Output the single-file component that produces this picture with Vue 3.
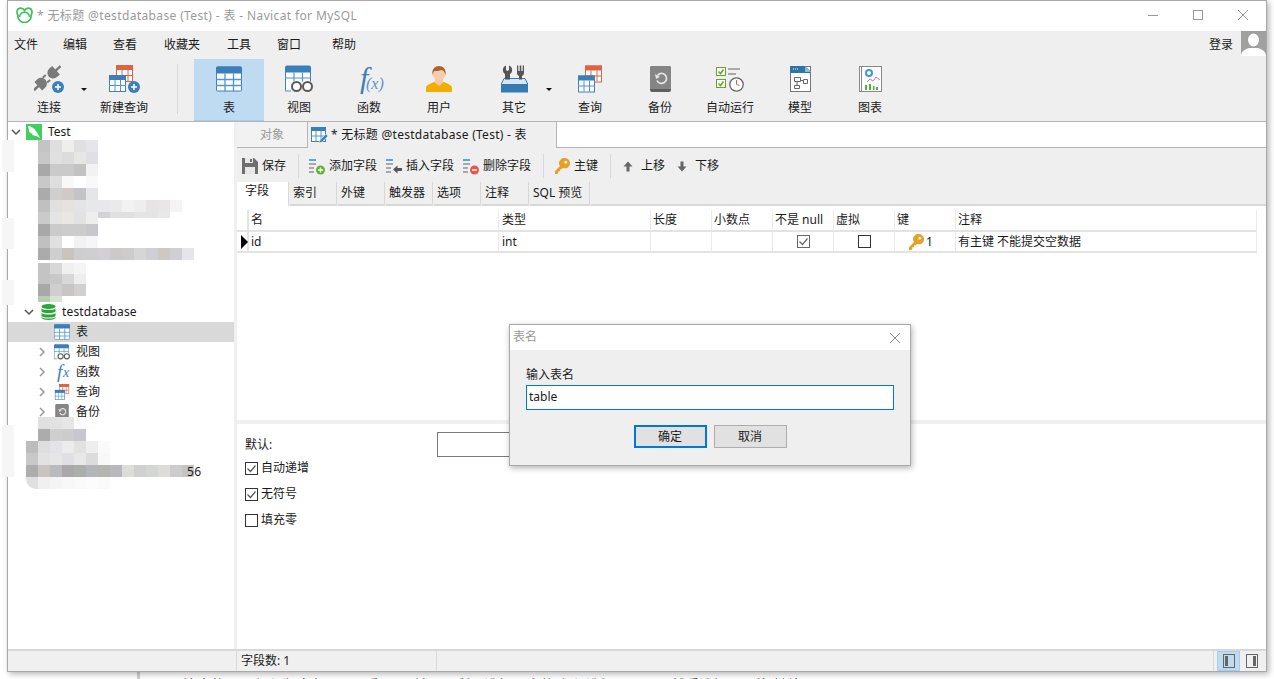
<script setup>
const menus = ['文件', '编辑', '查看', '收藏夹', '工具', '窗口', '帮助']

const leftTools = [
  { label: '连接', icon: 'plug', w: 30, h: 28, cls: 'tool-conn', arrow: true },
  { label: '新建查询', icon: 'newquery', w: 31, h: 28, cls: 'tool-new' }
]
const tools = [
  { label: '表', icon: 'table', w: 26, h: 25, active: true },
  { label: '视图', icon: 'view', w: 28, h: 27 },
  { label: '函数', icon: 'fx', w: 30, h: 30 },
  { label: '用户', icon: 'user', w: 26, h: 26 },
  { label: '其它', icon: 'other', w: 27, h: 27, arrow: true },
  { label: '查询', icon: 'query', w: 24, h: 27 },
  { label: '备份', icon: 'backup', w: 21, h: 26 },
  { label: '自动运行', icon: 'auto', w: 28, h: 26 },
  { label: '模型', icon: 'model', w: 21, h: 26 },
  { label: '图表', icon: 'chart', w: 23, h: 26 }
]

const subTabs = ['索引', '外键', '触发器', '选项', '注释', 'SQL 预览']
const columns = ['名', '类型', '长度', '小数点', '不是 null', '虚拟', '键', '注释']

const treeItems = [
  { label: '表', icon: 'table', selected: true },
  { label: '视图', icon: 'view', arrow: true },
  { label: '函数', icon: 'fxtree', arrow: true },
  { label: '查询', icon: 'query', arrow: true },
  { label: '备份', icon: 'backup', arrow: true }
]

// pixelated part of the tree, row by row
const mosaicTop = [
  [12, '#c4c4c4 #dedede #eeeeec #e0e0e0 #e6e6ea'],
  [12, '#c8c8c8 #e0e0e0 #dcdcdc #e6e6e4 #e0e0e4'],
  [12, '#a8a8a8 #cacaca #cacaca #c2c2c2 #f2f2f2'],
  [12, '#c8c8c8 #dedede #f8f8f8 #ffffff #f9f9f9'],
  [12, '#ababab #cfcfcf #cfcac8 #c4c4c6 #e4e6ea'],
  [12, '#c0c0c0 #e0e0e0 #e6e2de #e4e4e6 #e8e8ea #e8e8ea #eaeaea #f2f2f2 #eeeeee #e6e4e4 #e8e6e6 #f4f4f4'],
  [6, '#cacaca #e4e4e4 #eae6e2 #e2e2e2 #eeeeee #d4d2d6 #e0e0e0 #e0e0e0 #e4e4e4 #e4e4e4 #e8e8e8'],
  [6, '#cacaca #e4e4e4 #eae6e2 #e2e2e2 #eeeeee'],
  [12, '#a8a8a8 #cacaca #cccccc #cccccc #c8c8cc'],
  [12, '#c0c0c0 #e0e0e0 #ffffff #f2f2f2 #f6f6f8'],
  [12, '#ababab #cfcfcf #c8c4c0 #cecece #cfcfcf #d2d0d4 #ccc9c9 #cccccc #d6d6d6 #d0d0d4 #ccc8c4 #d0d0d4 #e6e6ea'],
  [3, ''],
  [11, '#c4c4c4 #d8d8d8 #f0f0f0 #f4f4f4'],
  [10, '#c4c4c4 #c8c8c8 #d8d8d8 #eeeeee'],
  [12, '#a8a8a8 #cfcfcf #c8c6c4 #d0d0d0'],
  [6, '#b4ceb0 #d6e4d6']
].map(([h, c]) => ({ h, cells: c ? c.split(' ') : [] }))

const mosaicBottom = [
  [12, 12, '#e0e0e0 #e2e2e2 #e6e6e6 #fafafa #fdfdfd'],
  [12, 12, '#acacac #cfcfcf #cccccc #c8c8cc'],
  [12, 0, '#bcbcbc #dedede #e4e4e8 #ececec #e2e2e2 #eeeeee #fafafa'],
  [12, 0, '#c8c8c8 #e2e2e2 #e6e6e6 #e0e0e4 #e8e8e8 #dcdcdc #f8f8f8'],
  [12, 0, '#adadad #c8c4c0 #b8bcbc #aba8ac #acaeaa #b2b6b8 #b4b4b0 #b8b8bc #dcdcd8 #d0d0d0 #d4d6d4 #dedcd8 #cccccc #c4c4c4'],
  [12, 0, '#e0e0e0 #f0f0f0 #f4f4f4 #f8f8f8 #fafafa #fcfcfc #fafafa #ffffff']
].map(([h, pad, c]) => ({ h, pad, cells: c.split(' ') }))

const ghosts = [
  [140, 32], [218, 31], [280, 25], [425, 52]
]

const options = [
  { label: '自动递增', checked: true },
  { label: '无符号', checked: true },
  { label: '填充零', checked: false }
]
</script>

<template>
  <div class="page">
    <svg class="defs" width="0" height="0">
      <symbol id="table" viewBox="0 0 26 25">
        <rect x=".5" y=".5" width="25" height="24" rx="1" fill="#fff" stroke="#3d82bd" />
        <path d="M0 2a2 2 0 0 1 2-2h22a2 2 0 0 1 2 2v5H0z" fill="#3a7fb8" />
        <path d="M0 13h26M0 19h26M9 7v18M17.500 7v18" stroke="#4f94d4" stroke-width="1.300" />
      </symbol>
      <symbol id="view" viewBox="0 0 28 27">
        <path d="M.5 25V2h25v14" fill="#fff" stroke="#3d82bd" />
        <path d="M0 2a2 2 0 0 1 2-2h22a2 2 0 0 1 2 2v5H0z" fill="#3a7fb8" />
        <path d="M0 12.500h26M9 7v9M17.500 7v9M0 25.500h6" stroke="#4f94d4" stroke-width="1.200" />
        <circle cx="11.500" cy="21" r="4.500" fill="#fff" stroke="#5a5a5a" stroke-width="2" />
        <circle cx="22.500" cy="21" r="4.500" fill="#fff" stroke="#5a5a5a" stroke-width="2" />
      </symbol>
      <symbol id="query" viewBox="0 0 24 27">
        <rect x="7.500" y=".5" width="16" height="16" fill="#fff" stroke="#dd6344" />
        <path d="M7 0h17v5H7z" fill="#dd6344" />
        <path d="M13 5v11M19 5v11M8 10.500h16" stroke="#dd6344" />
        <rect x=".5" y="10.500" width="16" height="16" fill="#fff" stroke="#3d82bd" />
        <path d="M0 10h17v5H0z" fill="#3a7fb8" />
        <path d="M6 15v11M11.500 15v11M0 20.500h17" stroke="#4f94d4" />
      </symbol>
      <symbol id="newquery" viewBox="0 0 31 28">
        <rect x="7.500" y=".5" width="16" height="16" fill="#fff" stroke="#dd6344" />
        <path d="M7 0h17v5H7z" fill="#dd6344" />
        <path d="M13 5v11M19 5v11M8 10.500h16" stroke="#dd6344" />
        <rect x=".5" y="10.500" width="16" height="16" fill="#fff" stroke="#3d82bd" />
        <path d="M0 10h17v5H0z" fill="#3a7fb8" />
        <path d="M6 15v11M11.500 15v11M0 20.500h17" stroke="#4f94d4" />
        <circle cx="25" cy="22" r="6" fill="#3a7fb8" />
        <path d="M22 22h6M25 19v6" stroke="#fff" stroke-width="1.500" />
      </symbol>
      <symbol id="plug" viewBox="0 0 30 28">
        <g transform="rotate(-42 13 13)" fill="#7a7a7a">
          <rect x="-5" y="12" width="7" height="2.500" />
          <path d="M1 7.500h4a5.700 5.700 0 0 1 0 11.500H1z" />
          <rect x="10" y="9" width="4" height="2" />
          <rect x="10" y="15.500" width="4" height="2" />
          <path d="M25 7.500h-4a5.700 5.700 0 0 0 0 11.500h4z" />
          <rect x="24" y="12" width="7" height="2.500" />
        </g>
        <circle cx="24" cy="22" r="6" fill="#3a7fb8" />
        <path d="M21 22h6M24 19v6" stroke="#fff" stroke-width="1.500" />
      </symbol>
      <symbol id="user" viewBox="0 0 26 26">
        <path d="M0 26v-4c0-3 4-4 8-6h10c4 2 8 3 8 6v4z" fill="#f1ad00" />
        <path d="M9 13h8v4l-4 3-4-3z" fill="#f2c8a8" />
        <circle cx="13" cy="8" r="6.500" fill="#f5cdad" />
        <path d="M6.500 9C5.500 3 9 0 13 0s7.500 3 6.500 9c-1-3-2-4.500-4-5-2 1-6 1-7 1-1 1-1.500 2-2 4z" fill="#a9652e" />
      </symbol>
      <symbol id="other" viewBox="0 0 27 27">
        <path d="M5 0v4.500l1.500 1 1.500-1V0c2.500 1 3.500 3 3 5.500-.3 1.500-1 2.500-2 3V18H4V8.500c-1-.5-1.700-1.500-2-3C1.500 3 2.500 1 5 0z" fill="#555" />
        <path d="M16 0h1.300v5.500h1.400V0h1.600v5.500h1.400V0H23v7.500c0 1.500-1 2.500-2 3V18h-3v-7.500c-1-.5-2-1.500-2-3z" fill="#555" />
        <path d="M3 13h21l3 6H0z" fill="#d6e6f3" stroke="#357ab0" />
        <path d="M9 14V9h-5v5zM21 14v-4h-3v4z" fill="#555" />
        <rect y="19" width="27" height="8" fill="#357ab0" />
      </symbol>
      <symbol id="backup" viewBox="0 0 21 26">
        <rect width="21" height="26" rx="2" fill="#5f5f5f" />
        <path d="M0 2a2 2 0 0 1 2-2h17a2 2 0 0 1 2 2v21H0z" fill="#858585" />
        <path d="M7.500 9.500a5 5 0 1 1-.5 5" fill="none" stroke="#e4e4e4" stroke-width="1.800" />
        <path d="M5 8l1 5 4-2z" fill="#e4e4e4" />
      </symbol>
      <symbol id="auto" viewBox="0 0 28 26">
        <rect x=".5" y="1.500" width="9" height="8" fill="#fff" stroke="#66a22e" />
        <path d="M2.500 5.500l2 2 3-4" fill="none" stroke="#66a22e" stroke-width="1.500" />
        <rect x=".5" y="13.500" width="9" height="8" fill="#fff" stroke="#66a22e" />
        <path d="M2.500 17.500l2 2 3-4" fill="none" stroke="#66a22e" stroke-width="1.500" />
        <path d="M12 3h12M12 8h8" stroke="#aaa" stroke-width="2" />
        <circle cx="20.500" cy="18.500" r="6.700" fill="#fff" stroke="#666" stroke-width="1.300" />
        <path d="M20.500 14v4.500l3 1" fill="none" stroke="#d9634a" />
      </symbol>
      <symbol id="model" viewBox="0 0 21 26">
        <rect x=".5" y=".5" width="20" height="25" fill="#fff" stroke="#777" />
        <path d="M0 0h15l6 6v1H0z" fill="#2f73a8" />
        <path d="M15 0l6 6h-6z" fill="#8db8da" />
        <path d="M3 3h1M5 3h1M7 3h1" stroke="#fff" />
        <path d="M4.500 11.500h6v4h-6zM13.500 13.500h4v4h-4zM4.500 19.500h5v3h-5zM10.500 14.500h3M7 15.500v4" fill="none" stroke="#666" />
      </symbol>
      <symbol id="chart" viewBox="0 0 23 26">
        <rect x=".5" y=".5" width="22" height="25" fill="#fff" stroke="#888" />
        <path d="M2.500 0v26" stroke="#888" />
        <circle cx="10" cy="7" r="3" fill="none" stroke="#3d9ad9" stroke-width="2" />
        <path d="M8 16l3-3 3 2 3-4 4 3" fill="none" stroke="#c77cd1" />
        <path d="M6 19h2v5H6zM10 18h2v6h-2zM14 20h1.500v4H14zM17 21h2v3h-2z" fill="#54ad3e" />
      </symbol>
      <symbol id="key" viewBox="0 0 16 17">
        <path d="M10.500 0a5.500 5.500 0 1 1-2 10.600L7 12H5.500v2H3.500v2l-1 1H0v-3l5.300-5.400A5.500 5.500 0 0 1 10.500 0z" fill="#e3a12a" />
        <circle cx="11.500" cy="4.500" r="1.500" fill="#fdf0cd" />
      </symbol>
      <symbol id="fields" viewBox="0 0 16 17">
        <path d="M0 1h7v2H0z" fill="#5aa7dd" />
        <path d="M0 5h7v2H0zM0 9h5v2H0zM0 13h5v2H0z" fill="#a8a8a8" />
      </symbol>
    </svg>

    <div class="window">
      <header class="titlebar">
        <svg class="logo" width="17" height="16" viewBox="0 0 17 16">
          <path d="M8.500 3.500C6.500 0 1.500.5 1 4.500c-.2 1.500.4 2.800 1 4-.7 4 3 7 6.500 7s7.200-3 6.500-7c.6-1.200 1.200-2.500 1-4-.5-4-5.500-4.500-7.500-1z" fill="none" stroke="#3fbf5a" stroke-width="1.700" />
          <path d="M3.500 10c.5-3 2.800-4.700 5-4.700s4.500 1.700 5 4.700" fill="none" stroke="#3fbf5a" stroke-width="1.500" />
        </svg>
        <span class="title">* 无标题 @testdatabase (Test) - 表 - Navicat for MySQL</span>
        <div class="win-controls">
          <svg width="12" height="12" viewBox="0 0 12 12"><path d="M1 6.500h10" stroke="#999" /></svg>
          <svg width="12" height="12" viewBox="0 0 12 12"><rect x="1.500" y="1.500" width="9" height="9" fill="none" stroke="#999" /></svg>
          <svg width="12" height="12" viewBox="0 0 12 12"><path d="M1 1l10 10M11 1L1 11" stroke="#999" /></svg>
        </div>
      </header>

      <nav class="menubar">
        <span v-for="m in menus" :key="m" class="menu-item">{{ m }}</span>
        <span class="login">登录</span>
        <div class="avatar">
          <svg width="25" height="25" viewBox="0 0 25 25">
            <ellipse cx="12.500" cy="9" rx="5.500" ry="6.500" fill="#fff" />
            <path d="M0 25c0-5 5-7 8-8h9c3 1 8 3 8 8z" fill="#fff" />
          </svg>
        </div>
      </nav>

      <div class="toolbar">
        <div v-for="t in leftTools" :key="t.label" class="tool" :class="t.cls">
          <svg :width="t.w" :height="t.h"><use :href="'#' + t.icon" /></svg>
          <span>{{ t.label }}</span>
          <i v-if="t.arrow" class="caret"></i>
        </div>
        <div class="tool-sep"></div>
        <div
          v-for="t in tools"
          :key="t.label"
          class="tool"
          :class="{ active: t.active, 'has-arrow': t.arrow }"
        >
          <div v-if="t.icon === 'fx'" class="fx-icon"><em class="fx-f">f</em><em class="fx-x">(x)</em></div>
          <svg v-else :width="t.w" :height="t.h"><use :href="'#' + t.icon" /></svg>
          <span>{{ t.label }}</span>
          <i v-if="t.arrow" class="caret"></i>
        </div>
      </div>

      <div class="body">
        <aside class="tree">
          <div class="row conn-row">
            <svg class="chev" width="10" height="10" viewBox="0 0 10 10"><path d="M1 3l4 4 4-4" fill="none" stroke="#555" stroke-width="1.500" /></svg>
            <svg width="16" height="16" viewBox="0 0 16 16">
              <rect width="16" height="16" fill="#3fcf5e" />
              <path d="M2 2c3 0 6 2 8 5 1 2 3 4 4 7-2-1-3-2-4-2-2 0-4-1-5-3-1 0-2-1-2-2 0-2-1-3-1-5z" fill="#fff" />
            </svg>
            <span>Test</span>
          </div>

          <div class="mosaic top-mosaic">
            <div v-for="(r, i) in mosaicTop" :key="i" class="mosaic-row" :style="{ height: r.h + 'px' }">
              <b v-for="(c, j) in r.cells" :key="j" :style="{ background: c }"></b>
            </div>
          </div>

          <div class="row db-row">
            <svg class="chev" width="10" height="10" viewBox="0 0 10 10"><path d="M1 3l4 4 4-4" fill="none" stroke="#555" stroke-width="1.500" /></svg>
            <svg width="15" height="16" viewBox="0 0 15 16">
              <ellipse cx="7.500" cy="2.500" rx="7" ry="2.500" fill="#2aa53a" />
              <path d="M.5 4.500c2 2 12 2 14 0v3c-2 2-12 2-14 0zM.5 9c2 2 12 2 14 0v3c-2 2-12 2-14 0zM.5 13c2 2 12 2 14 0v1c-2 2.500-12 2.500-14 0z" fill="#2aa53a" />
            </svg>
            <span class="latin">testdatabase</span>
          </div>
          <div v-for="t in treeItems" :key="t.label" class="row sub-row" :class="{ selected: t.selected }">
            <svg v-if="t.arrow" class="sub-chev" width="8" height="10" viewBox="0 0 8 10"><path d="M2 1l4 4-4 4" fill="none" stroke="#999" stroke-width="1.500" /></svg>
            <div v-if="t.icon === 'fxtree'" class="fx-tree sub-icon"><em class="fx-f">f</em><em class="fx-x">x</em></div>
            <svg v-else class="sub-icon" width="16" height="16"><use :href="'#' + t.icon" /></svg>
            <span>{{ t.label }}</span>
          </div>

          <div class="mosaic bottom-mosaic">
            <div
              v-for="(r, i) in mosaicBottom"
              :key="i"
              class="mosaic-row"
              :style="{ height: r.h + 'px', paddingLeft: r.pad + 'px' }"
            >
              <b v-for="(c, j) in r.cells" :key="j" :style="{ background: c }"></b>
            </div>
            <span class="mosaic-tail">56</span>
          </div>
        </aside>

        <main class="content">
          <div class="doc-tabs">
            <div class="doc-tab object-tab">对象</div>
            <div class="doc-tab current-tab">
              <svg width="17" height="17" viewBox="0 0 17 17">
                <rect x=".5" y=".5" width="14" height="14" fill="#fff" stroke="#3d82bd" />
                <path d="M0 0h15v4H0z" fill="#3a7fb8" />
                <path d="M5 4v10M10 4v10M0 9h15" stroke="#4f94d4" />
                <path d="M8 16l1-3 6-6 2 2-6 6z" fill="#3a7fb8" stroke="#fff" stroke-width=".5" />
              </svg>
              <span class="tab-text">* 无标题 @testdatabase (Test) - 表</span>
            </div>
            <div class="doc-rest"></div>
          </div>

          <div class="actions">
            <div class="action save">
              <svg width="16" height="18" viewBox="0 0 16 18">
                <path d="M0 1h12l4 4v12H0z" fill="#6e6e6e" />
                <path d="M3 1h8v5H3z" fill="#e8e8e8" />
                <path d="M3 10h10v7H3z" fill="#e8e8e8" />
                <path d="M8 2h2v3H8z" fill="#6e6e6e" />
              </svg>
              <span>保存</span>
            </div>
            <i class="action-sep"></i>
            <div class="action">
              <svg width="16" height="17" viewBox="0 0 16 17">
                <use href="#fields" />
                <circle cx="11.500" cy="12" r="4.500" fill="#5cb531" />
                <path d="M9 12h5M11.500 9.500v5" stroke="#fff" stroke-width="1.300" />
              </svg>
              <span>添加字段</span>
            </div>
            <div class="action">
              <svg width="16" height="17" viewBox="0 0 16 17">
                <use href="#fields" />
                <path d="M7 11.500l4.500-4v2.500H16v3h-4.500v2.500z" fill="#555" />
              </svg>
              <span>插入字段</span>
            </div>
            <div class="action">
              <svg width="16" height="17" viewBox="0 0 16 17">
                <use href="#fields" />
                <circle cx="11.500" cy="12" r="4.500" fill="#e8574b" />
                <path d="M9 12h5" stroke="#fff" stroke-width="1.500" />
              </svg>
              <span>删除字段</span>
            </div>
            <i class="action-sep sep-key"></i>
            <div class="action key-action">
              <svg width="15" height="16"><use href="#key" /></svg>
              <span>主键</span>
            </div>
            <i class="action-sep sep-move"></i>
            <div class="action move">
              <svg width="10" height="11" viewBox="0 0 10 11"><path d="M5 .5l4.500 5H6.500v5h-3v-5H.5z" fill="#666" /></svg>
              <span>上移</span>
            </div>
            <div class="action move">
              <svg width="10" height="11" viewBox="0 0 10 11"><path d="M5 10.500l4.500-5H6.500v-5h-3v5H.5z" fill="#666" /></svg>
              <span>下移</span>
            </div>
          </div>

          <div class="sub-tabs">
            <div class="sub-tab active">字段</div>
            <div v-for="t in subTabs" :key="t" class="sub-tab">{{ t }}</div>
            <div class="sub-rest"></div>
          </div>

          <div class="upper">
            <div class="grid">
              <div class="cell gutter"></div>
              <div v-for="c in columns" :key="c" class="cell head">{{ c }}</div>

              <div class="cell gutter">
                <svg width="8" height="14" viewBox="0 0 8 14"><path d="M1 0l7 7-7 7z" fill="#000" /></svg>
              </div>
              <div class="cell">id</div>
              <div class="cell">int</div>
              <div class="cell"></div>
              <div class="cell"></div>
              <div class="cell center">
                <span class="check small-check checked"><svg width="11" height="11" viewBox="0 0 11 11"><path d="M1.500 5.500l3 3 5-6" fill="none" stroke="#666" stroke-width="1.200" /></svg></span>
              </div>
              <div class="cell center"><span class="check small-check dark"></span></div>
              <div class="cell key-cell">
                <svg width="15" height="16"><use href="#key" /></svg>
                <span>1</span>
              </div>
              <div class="cell">有主键 不能提交空数据</div>
            </div>
          </div>

          <div class="lower">
            <div class="default-row">
              <span>默认:</span>
              <div class="default-box"></div>
            </div>
            <label v-for="o in options" :key="o.label" class="opt">
              <span class="check dark">
                <svg v-if="o.checked" width="11" height="11" viewBox="0 0 11 11"><path d="M1.500 5.500l3 3 5-6" fill="none" stroke="#555" stroke-width="1.200" /></svg>
              </span>
              <span>{{ o.label }}</span>
            </label>
          </div>
        </main>
      </div>

      <footer class="statusbar">
        <div class="status-left"></div>
        <div class="status-count">字段数: 1</div>
        <div class="status-fill"></div>
        <div class="status-btn on"><i class="pane pane-l"></i></div>
        <div class="status-btn"><i class="pane pane-r"></i></div>
      </footer>
    </div>

    <div class="below">
      <p>用下注意的是，必和为才出，可以看NULL输入，所以选择下方的 必须选择 "下面"，然后选择，不能 继续</p>
    </div>

    <i v-for="g in ghosts" :key="g[0]" class="ghost" :style="{ top: g[0] + 'px', height: g[1] + 'px' }"></i>

    <div class="dialog">
      <div class="dialog-title">
        <span>表名</span>
        <svg width="12" height="12" viewBox="0 0 12 12"><path d="M1 1l10 10M11 1L1 11" stroke="#8a8a8a" /></svg>
      </div>
      <div class="dialog-body">
        <div class="dialog-label">输入表名</div>
        <div class="dialog-input">table</div>
        <div class="dialog-btns">
          <button class="btn primary">确定</button>
          <button class="btn">取消</button>
        </div>
      </div>
    </div>
  </div>
</template>

<style>
html, body { margin: 0; background: #fff; overflow: hidden; }
</style>

<style scoped>
.page {
  position: relative;
  width: 1274px;
  height: 679px;
  overflow: hidden;
  background: #fff;
  font: 12px/16px "Noto Sans", "Noto Sans CJK SC", sans-serif;
  color: #1a1a1a;
}
.defs { position: absolute; }
svg { display: block; flex: none; }

.window {
  width: 1260px;
  height: 672px;
  margin-left: 7px;
  box-sizing: border-box;
  border: 1px solid #a9a9a9;
  box-shadow: 2px 2px 6px rgba(0, 0, 0, .3);
  background: #fff;
  display: flex;
  flex-direction: column;
  position: relative;
}

.titlebar {
  height: 30px;
  display: flex;
  align-items: center;
  padding-left: 8px;
  flex: none;
}
.logo { margin-right: 4px; margin-top: -2px; }
.title { color: #9a9a9a; margin-top: -1px; letter-spacing: .37px; }
.win-controls {
  margin-left: auto;
  display: flex;
  gap: 33px;
  padding-right: 17px;
  margin-top: -2px;
}

.menubar {
  height: 27px;
  flex: none;
  background: #efefef;
  display: flex;
  align-items: flex-start;
  padding-left: 6px;
  line-height: 27px;
}
.menu-item { margin-right: 25px; }
.menu-item:nth-child(2) { margin-right: 26px; }
.menu-item:nth-child(3) { margin-right: 27px; }
.menu-item:nth-child(4) { margin-right: 27px; }
.menu-item:nth-child(5) { margin-right: 26px; }
.menu-item:nth-child(6) { margin-right: 31px; }
.login { margin-left: auto; margin-right: 8px; }
.avatar { width: 25px; height: 25px; background: #a0a0a0; overflow: hidden; }

.toolbar {
  height: 64px;
  flex: none;
  background: #efefef;
  border-bottom: 1px solid #b5b5b5;
  box-sizing: border-box;
  display: flex;
}
.tool {
  position: relative;
  width: 70px;
  height: 62px;
  display: flex;
  flex-direction: column;
  align-items: center;
  padding-top: 6px;
  box-sizing: border-box;
  flex: none;
  margin-top: 1px;
}
.tool svg { height: 28px; margin-bottom: 4px; }
.tool span { position: absolute; top: 41px; left: 0; right: 0; text-align: center; }
.tool.active { background: #bfdbf2; border-bottom: 1px solid #a5cdee; }
.tool.has-arrow { width: 80px; margin-right: 1px; }
.tool-conn { width: 82px; }
.tool-new { margin-left: -1px; width: 70px; }
.caret {
  position: absolute;
  top: 29px;
  right: 2px;
  border: 3px solid transparent;
  border-top: 3px solid #111;
  border-bottom: 0;
}
.tool-conn .caret { right: 3px; }
.tool-sep { width: 1px; height: 50px; margin: 6px 16px 0 18px; background: #d8d8d8; flex: none; }

.fx-icon { position: relative; width: 30px; height: 28px; font-family: "Liberation Serif", serif; }
.fx-icon em { position: absolute; }
.fx-icon .fx-f { left: 6px; top: -4px; font-size: 30px; line-height: 34px; color: #3a7fb8; }
.fx-icon .fx-x { left: 12px; top: 10px; font-size: 16px; line-height: 18px; color: #5a94c4; }

.fx-tree {
  position: relative;
  width: 16px;
  height: 18px;
  font-family: "Liberation Serif", serif;
  color: #3a7fb8;
}
.fx-tree em { position: absolute; }
.fx-tree .fx-f { left: 3px; top: -2px; font-size: 19px; line-height: 22px; }
.fx-tree .fx-x { left: 9px; top: 2px; font-size: 14px; line-height: 16px; }

.body { flex: 1; display: flex; min-height: 0; }

.tree {
  width: 226px;
  flex: none;
  background: #fff;
  position: relative;
}
.latin { letter-spacing: .15px; }
.row { height: 20px; display: flex; align-items: center; }
.conn-row { height: 18px; padding: 2px 0 0 3px; box-sizing: border-box; }
.conn-row .chev { margin-right: 5px; }
.conn-row svg + svg { margin-right: 6px; }
.db-row { padding-left: 16px; }
.db-row .chev { margin-right: 7px; }
.db-row svg + svg { margin-right: 6px; }
.sub-row { padding-left: 46px; position: relative; }
.sub-row.selected { background: #d9d9d9; }
.sub-chev { position: absolute; left: 30px; top: 5px; }
.sub-icon { margin-right: 6px; }

.mosaic-row { display: flex; }
.mosaic-row b { width: 12px; flex: none; }
.top-mosaic { padding-left: 30px; height: 162px; }
.bottom-mosaic {
  position: relative;
  margin-top: -5px;
  padding-left: 18px;
}
.bottom-mosaic .mosaic-row:last-of-type b:first-child { border-bottom-left-radius: 10px; }
.mosaic-tail { position: absolute; left: 179px; top: 47px; letter-spacing: .4px; }

.content { flex: 1; min-width: 0; display: flex; flex-direction: column; margin-left: 3px; position: relative; }
.tree + .content::before {
  content: "";
  position: absolute;
  left: -3px;
  top: 0;
  bottom: 0;
  width: 3px;
  background: #f0f0f0;
}

.doc-tabs { height: 26px; flex: none; display: flex; background: #fff; }
.doc-tab { box-sizing: border-box; height: 26px; display: flex; align-items: center; }
.object-tab {
  width: 71px;
  justify-content: center;
  background: #f2f2f2;
  color: #9a9a9a;
  border-right: 1px solid #b5b5b5;
  border-bottom: 1px solid #b5b5b5;
}
.current-tab { width: 249px; background: #efefef; padding-left: 3px; gap: 3px; border-right: 1px solid #b5b5b5; }
.tab-text { letter-spacing: .27px; }
.doc-rest { flex: 1; border-bottom: 1px solid #b5b5b5; background: #fff; }

.actions {
  height: 34px;
  flex: none;
  box-sizing: border-box;
  padding: 2px 0 0 5px;
  background: #efefef;
  display: flex;
  align-items: center;
}
.action { display: flex; align-items: center; gap: 4px; margin-right: 9px; }
.action.save { margin-right: 12px; }
.action-sep { width: 1px; height: 24px; background: #d8d8d8; margin-right: 10px; }
.sep-key { margin-left: 3px; margin-right: 11px; }
.key-action { margin-right: 12px; }
.sep-move { margin-right: 12px; }
.move { gap: 8px; margin-right: 12px; }

.sub-tabs {
  height: 24px;
  flex: none;
  display: flex;
  background: #efefef;
}
.sub-tab {
  width: 47px;
  box-sizing: border-box;
  padding-left: 3px;
  line-height: 22px;
  margin-right: 1px;
  background: #efefef;
  border-bottom: 2px solid #d8d8d8;
  border-right: 1px solid #d8d8d8;
}
.sub-tab:nth-child(7) { width: 60px; }
.sub-tab.active {
  width: 52px;
  padding-left: 8px;
  background: #fff;
  border-bottom: 0;
  border-right: 1px solid #d8d8d8;
  line-height: 18px;
}
.sub-rest { flex: 1; border-bottom: 2px solid #d8d8d8; }

.upper { flex: none; height: 218px; padding-top: 4px; box-sizing: border-box; background: #fff; border-bottom: 4px solid #f0f0f0; }
.grid {
  display: grid;
  grid-template-columns: 12px 250px 152px 61px 61px 61px 61px 61px 301px;
  grid-template-rows: 22px 21px;
}
.cell {
  box-sizing: border-box;
  border-right: 1px solid #eaeaea;
  border-bottom: 2px solid #e3e3e3;
  padding-left: 2px;
  line-height: 20px;
  display: flex;
  align-items: center;
}
.cell:nth-child(3), .cell:nth-child(12) { padding-left: 3px; }
.cell.gutter { padding-left: 3px; border-right: 2px solid #e3e3e3; }
.cell.center { justify-content: center; padding-left: 0; }
.key-cell { padding-left: 14px; gap: 2px; }

.lower { flex: 1; padding: 12px 8px; position: relative; background: #fff; }
.default-row { display: flex; height: 18px; align-items: center; }
.default-box {
  position: absolute;
  left: 200px;
  top: 8px;
  width: 280px;
  height: 25px;
  box-sizing: border-box;
  border: 1px solid #7a7a7a;
  background: #fff;
}
.opt { display: flex; align-items: center; gap: 3px; height: 26px; }
.default-row + .opt { margin-top: 1px; }
.check {
  width: 13px;
  height: 13px;
  box-sizing: border-box;
  border: 1px solid #555;
  background: #fff;
  display: block;
  flex: none;
}
.small-check { border-color: #666; }
.dark { border-color: #333; }

.statusbar {
  height: 22px;
  flex: none;
  display: flex;
  align-items: center;
  background: #f0f0f0;
  border-top: 2px solid #d8d8d8;
  box-sizing: border-box;
}
.status-left { width: 228px; height: 100%; border-right: 1px solid #d8d8d8; flex: none; }
.status-count { width: 195px; padding-left: 4px; height: 100%; line-height: 20px; border-right: 1px solid #d8d8d8; flex: none; }
.status-fill { flex: 1; height: 100%; border-right: 1px solid #d8d8d8; margin-right: 3px; }
.status-btn {
  width: 23px;
  height: 20px;
  box-sizing: border-box;
  display: flex;
  align-items: center;
  justify-content: center;
}
.status-btn:last-child { margin-right: 3px; }
.status-btn.on { background: #bfdbf2; border: 1px solid #a5cdee; }
.pane {
  display: block;
  position: relative;
  width: 10px;
  height: 12px;
  border: 1px solid #666;
}
.pane::after { content: ""; position: absolute; top: 1px; bottom: 1px; width: 3px; background: #666; }
.pane-l::after { left: 1px; }
.pane-r::after { right: 1px; }

.below {
  margin-left: 137px;
  height: 7px;
  border-left: 3px solid #d0d0d0;
  padding-left: 15px;
  overflow: hidden;
}
.below p { margin: 3px 0 0; font-size: 14px; line-height: 20px; color: #444; white-space: nowrap; }

.ghost {
  position: absolute;
  left: 2px;
  width: 12px;
  background: #f6f6f6;
}

.dialog {
  position: absolute;
  left: 509px;
  top: 324px;
  width: 402px;
  height: 142px;
  box-sizing: border-box;
  border: 1px solid #a9a9a9;
  box-shadow: 1px 2px 6px rgba(0, 0, 0, .3);
  background: #efefef;
}
.dialog-title {
  height: 25px;
  background: #fff;
  display: flex;
  align-items: center;
  justify-content: space-between;
  padding: 0 9px 0 3px;
  color: #9a9a9a;
}
.dialog-title span { margin-top: -2px; }
.dialog-body { padding: 17px 16px 0; }
.dialog-label { line-height: 16px; margin-bottom: 2px; }
.dialog-input {
  height: 25px;
  box-sizing: border-box;
  border: 1px solid #0078d7;
  background: #fff;
  padding-left: 2px;
  line-height: 21px;
}
.dialog-btns { display: flex; justify-content: center; gap: 7px; margin-top: 15px; }
.btn {
  width: 73px;
  height: 23px;
  padding: 0;
  box-sizing: border-box;
  border: 1px solid #adadad;
  background: #e1e1e1;
  font: inherit;
  color: #1a1a1a;
}
.btn.primary { border: 2px solid #0078d7; }
</style>
